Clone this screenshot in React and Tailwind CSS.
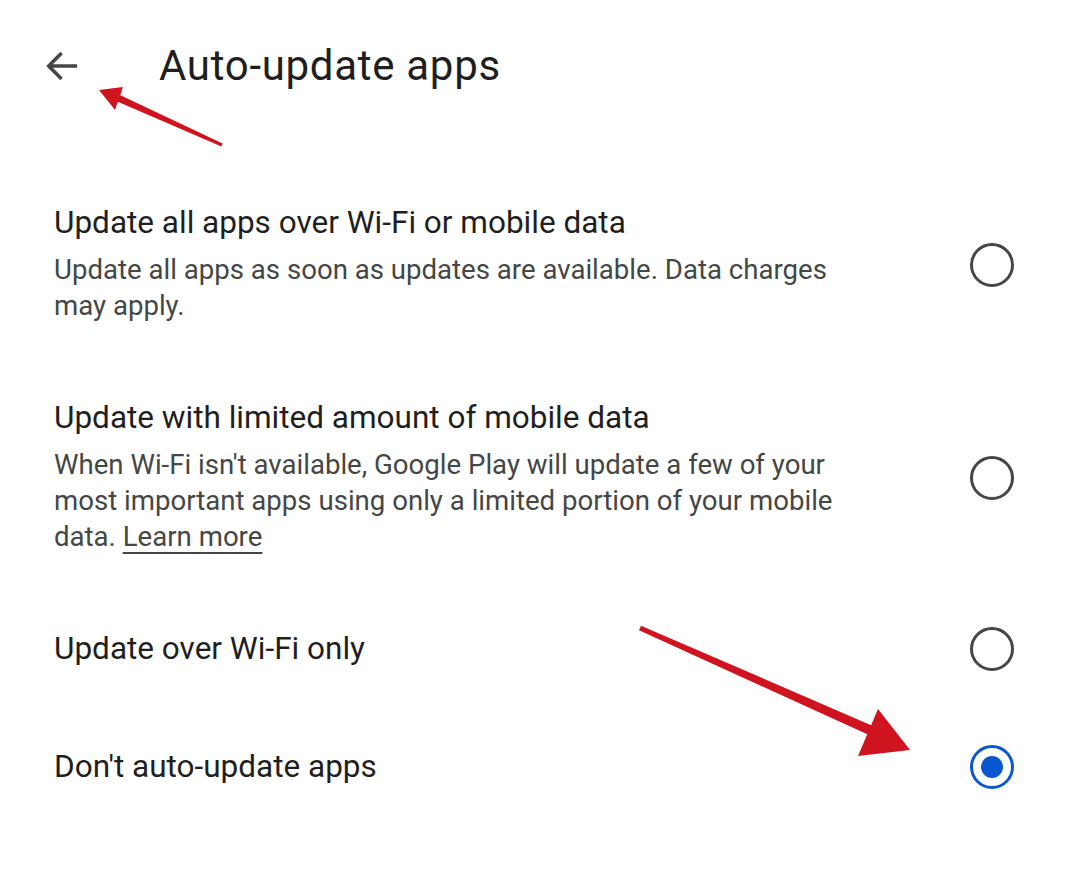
import { useState } from 'react'

const OPTIONS = [
  {
    id: 'all',
    title: 'Update all apps over Wi-Fi or mobile data',
    desc: 'Update all apps as soon as updates are available. Data charges may apply.',
    gap: 'pb-[76px]',
  },
  {
    id: 'limited',
    title: 'Update with limited amount of mobile data',
    desc: "When Wi-Fi isn't available, Google Play will update a few of your most important apps using only a limited portion of your mobile data.",
    learnMore: true,
    gap: 'pb-[72px]',
  },
  { id: 'wifi', title: 'Update over Wi-Fi only', gap: 'pb-[74px]' },
  { id: 'never', title: "Don't auto-update apps", gap: '' },
]

function Radio({ checked }) {
  return (
    <span
      className={
        'shrink-0 w-[44px] h-[44px] rounded-full border-[3.5px] flex items-center justify-center ' +
        (checked ? 'border-[#0b57d0]' : 'border-[#444746]')
      }
    >
      {checked && <span className="w-[22px] h-[22px] rounded-full bg-[#0b57d0]" />}
    </span>
  )
}

export default function App() {
  const [selected, setSelected] = useState('never')

  return (
    <div className="relative w-[1080px] h-[880px] bg-white font-['Roboto',sans-serif] text-[#1f1f1f] overflow-hidden">
      {/* header */}
      <div className="flex items-center h-[134px] pl-[42px] pb-[2px]">
        <svg width="40" height="40" viewBox="0 0 24 24" className="text-[#444746]">
          <path d="M20 12H4.5M11 5l-7 7 7 7" fill="none" stroke="currentColor" strokeWidth="2.1" strokeLinecap="square" />
        </svg>
        <h1 className="ml-[77px] text-[42px] leading-none tracking-[0.7px]">Auto-update apps</h1>
      </div>

      <div className="pt-[71px]">
        {OPTIONS.map(o => (
          <button
            key={o.id}
            onClick={() => setSelected(o.id)}
            className={'w-full flex items-center text-left pl-[54px] pr-[66px] ' + o.gap}
          >
            <div className="flex-1 pr-[122px]">
              <div className="text-[31.5px] leading-[36px]">{o.title}</div>
              {o.desc && (
                <p className="mt-[11px] text-[27.6px] leading-[36px] text-[#444746]">
                  {o.desc}{' '}
                  {o.learnMore && <span className="underline underline-offset-[6px] decoration-[2px]">Learn more</span>}
                </p>
              )}
            </div>
            <Radio checked={selected === o.id} />
          </button>
        ))}
      </div>

      {/* annotation arrows */}
      <svg className="absolute inset-0 pointer-events-none" width="1080" height="880">
        <polygon points="222.6,143.6 221.4,146.4 116.6,101.2 119.4,94.8" fill="#d0141f" />
        <polygon points="99,90 123,87 115,110" fill="#d0141f" />
        <polygon points="641,625.7 874,726.4 870,735.6 639,630.3" fill="#d0141f" />
        <polygon points="910,750 878,709 858,756" fill="#d0141f" />
      </svg>
    </div>
  )
}
